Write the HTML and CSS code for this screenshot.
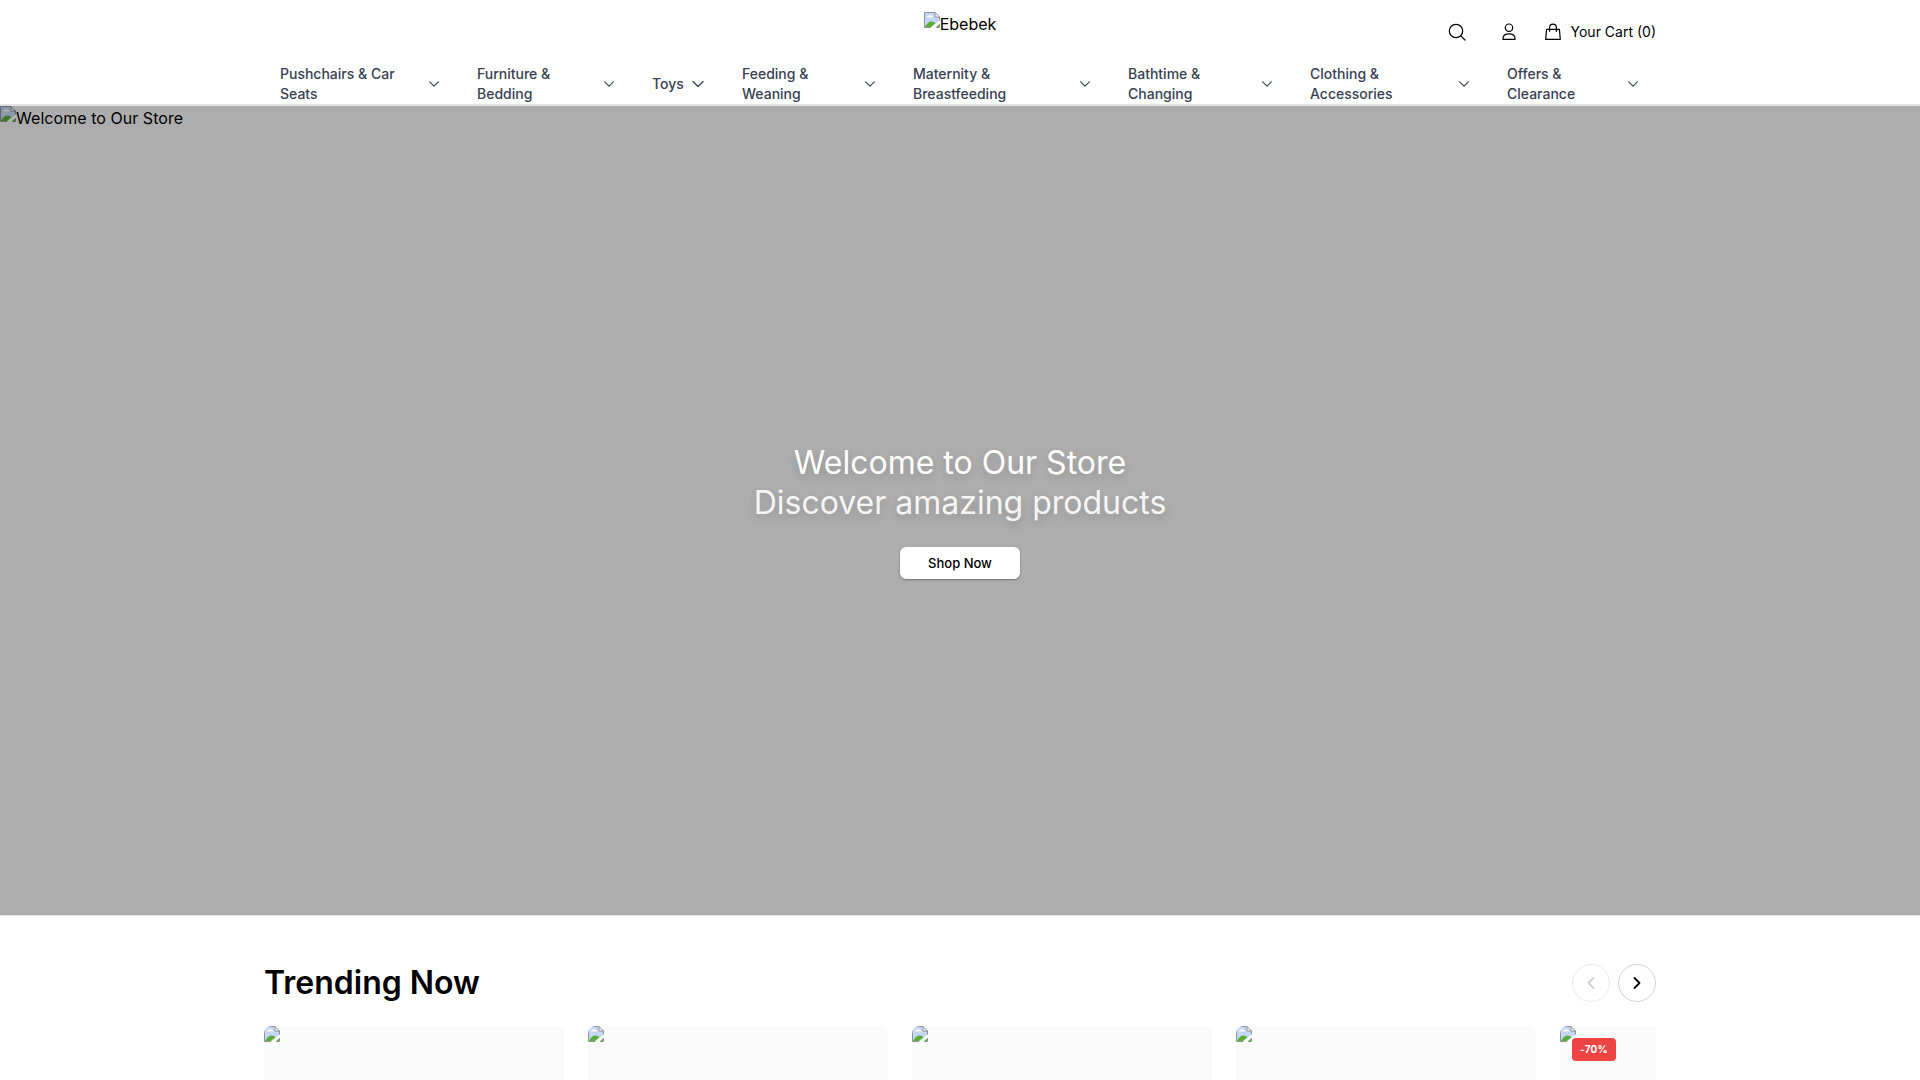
FILE: index.html
```
<!DOCTYPE html>
<html lang="en">
<head>
<meta charset="utf-8">
<title>Ebebek</title>
<link rel="stylesheet" href="styles.css">
</head>
<body>
<svg class="defs" aria-hidden="true">
  <symbol id="broken" viewBox="0 0 16 16">
    <path d="M0.5 0.5h10.5l4.5 4.5v3.500L7 15.500H.5z" fill="#c5d7f7"/>
    <path d="M3 5.500h6c0-1.200-.8-1.800-1.700-1.700C7 2.700 5 2.600 4.600 4 3.700 3.900 3 4.600 3 5.500z" fill="#fff"/>
    <path d="M1 15c1.500-3.500 4-5.500 6.500-5.500 1.800 0 3 .8 3.800 1.700L7 15z" fill="#5aad35"/>
    <path d="M11.500 15l4-3.500V15z" fill="#5aad35"/>
    <path d="M11 .5v4.500h4.500z" fill="#fff"/>
    <path d="M7 16l9-7.500v3l-5 4.500z" fill="var(--tear, #fff)"/>
    <path d="M7 15.500H.5V.5H11l4.500 4.500V8.500M11 .5v4.500h4.500M12 15.500h3.500V12" fill="none" stroke="#929292"/>
  </symbol>
  <symbol id="chev" viewBox="0 0 16 16">
    <path d="M3 5.500l5 5 5-5" fill="none" stroke="currentColor" stroke-width="1.300" stroke-linecap="round" stroke-linejoin="round"/>
  </symbol>
</svg>
<header class="header">
  <div class="topbar">
    <span></span>
    <a class="logo"><svg class="broken"><use href="#broken"/></svg><span>Ebebek</span></a>
    <div class="actions">
      <svg class="act search" viewBox="0 0 20 20"><circle cx="9" cy="9" r="6.700"/><path d="M13.800 13.800l4.200 4.200"/></svg>
      <svg class="act user" viewBox="0 0 20 20"><circle cx="10" cy="5.700" r="3.700"/><path d="M4 17.400v-.9c0-2.700 2.300-4.700 6-4.700s6 2 6 4.700v.9z"/></svg>
      <svg class="act bag" viewBox="0 0 20 20"><path d="M3.600 7.300h12.800l.9 10.100H2.700zM6.600 9.300V5.600a3.400 3.400 0 0 1 6.800 0v3.700"/></svg>
      <span class="cart">Your Cart (0)</span>
    </div>
  </div>
  <nav class="nav">
    <a>Pushchairs &amp; Car<br>Seats<svg><use href="#chev"/></svg></a>
    <a>Furniture &amp;<br>Bedding<svg><use href="#chev"/></svg></a>
    <a class="single">Toys<svg><use href="#chev"/></svg></a>
    <a>Feeding &amp;<br>Weaning<svg><use href="#chev"/></svg></a>
    <a>Maternity &amp;<br>Breastfeeding<svg><use href="#chev"/></svg></a>
    <a>Bathtime &amp;<br>Changing<svg><use href="#chev"/></svg></a>
    <a>Clothing &amp;<br>Accessories<svg><use href="#chev"/></svg></a>
    <a>Offers &amp;<br>Clearance<svg><use href="#chev"/></svg></a>
  </nav>
</header>
<section class="hero">
  <div class="hero-alt"><svg class="broken"><use href="#broken"/></svg><span>Welcome to Our Store</span></div>
  <div class="hero-copy">
    <h1>Welcome to Our Store</h1>
    <p>Discover amazing products</p>
    <a class="shop">Shop Now</a>
  </div>
</section>
<section class="trending">
  <div class="heading">
    <h2>Trending Now</h2>
    <div class="arrows">
      <button class="off"><svg viewBox="0 0 16 16"><path d="M10.500 3l-5 5 5 5"/></svg></button>
      <button><svg viewBox="0 0 16 16"><path d="M5.500 3l5 5-5 5"/></svg></button>
    </div>
  </div>
  <div class="cards">
    <div class="card"><svg class="broken"><use href="#broken"/></svg></div>
    <div class="card"><svg class="broken"><use href="#broken"/></svg></div>
    <div class="card"><svg class="broken"><use href="#broken"/></svg></div>
    <div class="card"><svg class="broken"><use href="#broken"/></svg></div>
    <div class="card"><svg class="broken"><use href="#broken"/></svg><span class="badge">-70%</span></div>
  </div>
</section>
</body>
</html>
```
FILE: styles.css
```
* { box-sizing: border-box; margin: 0; }
body { height: 1080px; overflow: hidden; background: #fff; color: #000; font: 16px/24px Inter, sans-serif; }
.defs { display: none; }
.broken { width: 16px; height: 16px; flex: none; }
.header { height: 106px; border-bottom: 2px solid #e3e3e3; }
.topbar { width: 1392px; height: 64px; margin: 0 auto; display: grid; grid-template-columns: 1fr auto 1fr; }
.logo { display: flex; padding-top: 12px; }
.actions { display: flex; justify-content: flex-end; align-items: center; height: 64px; }
.act { width: 20px; height: 20px; fill: none; stroke: #000; stroke-width: 1.200; stroke-linejoin: round; stroke-linecap: round; }
.user { margin-left: 32px; }
.bag { margin: 0 8px 0 24px; }
.cart { font-size: 14px; line-height: 20px; }
.nav { width: 1392px; height: 40px; margin: 0 auto; display: grid; grid-template-columns: 197px 175px 90px 171px 215px 182px 197px 165px; }
.nav a { display: flex; align-items: center; padding: 0 20px 0 16px; font-size: 14px; font-weight: 500; line-height: 20px; color: #374151; }
.nav a:last-child { padding-right: 16px; }
.nav svg { width: 14px; height: 14px; margin-left: auto; }
.nav .single svg { width: 16px; height: 16px; }
.hero { height: 810px; background: #adadad; border-bottom: 1px solid #e3e3e3; display: grid; position: relative; }
.hero-alt { --tear: #fff; position: absolute; top: 0; left: 0; display: flex; }
.hero-alt span { letter-spacing: .05px; }
.hero-alt .broken { filter: brightness(.7); }
.hero-copy { display: flex; flex-direction: column; align-items: center; padding-top: 337px; color: #fff; }
h1, .hero-copy p { font-size: 32px; line-height: 40px; font-weight: 400; text-shadow: 0 4px 8px rgba(0, 0, 0, .15); }
.hero-copy p { color: #f5f5f5; }
.shop { width: 120px; height: 32px; margin-top: 24px; border-radius: 6px; background: #fff; color: #000; font-size: 13px; font-weight: 500; line-height: 32px; text-align: center; box-shadow: 0 1px 2px rgba(0, 0, 0, .35); }
.trending { width: 1392px; margin: 0 auto; padding-top: 48px; }
.heading { display: flex; justify-content: space-between; align-items: center; height: 38px; margin-bottom: 24px; }
h2 { font-size: 32px; line-height: 38px; font-weight: 600; }
.arrows { display: flex; gap: 8px; }
.arrows button { width: 38px; height: 38px; padding: 0; border: 1px solid #d1d5db; border-radius: 50%; background: #fff; display: grid; place-items: center; }
.arrows .off { opacity: .5; }
.arrows svg { width: 16px; height: 16px; fill: none; stroke: #000; stroke-width: 1.800; stroke-linecap: round; stroke-linejoin: round; }
.arrows .off svg { stroke: #9ca3af; }
.cards { display: flex; gap: 24px; height: 54px; overflow: hidden; }
.card { position: relative; flex: 0 0 300px; height: 54px; background: #fafafa; border-radius: 8px 8px 0 0; overflow: hidden; }
.card .broken { display: block; }
.badge { position: absolute; left: 12px; top: 12px; width: 44px; height: 23px; border-radius: 4px; background: #ef4444; color: #fff; font-size: 10px; font-weight: 700; line-height: 23px; letter-spacing: .2px; text-align: center; }
```
